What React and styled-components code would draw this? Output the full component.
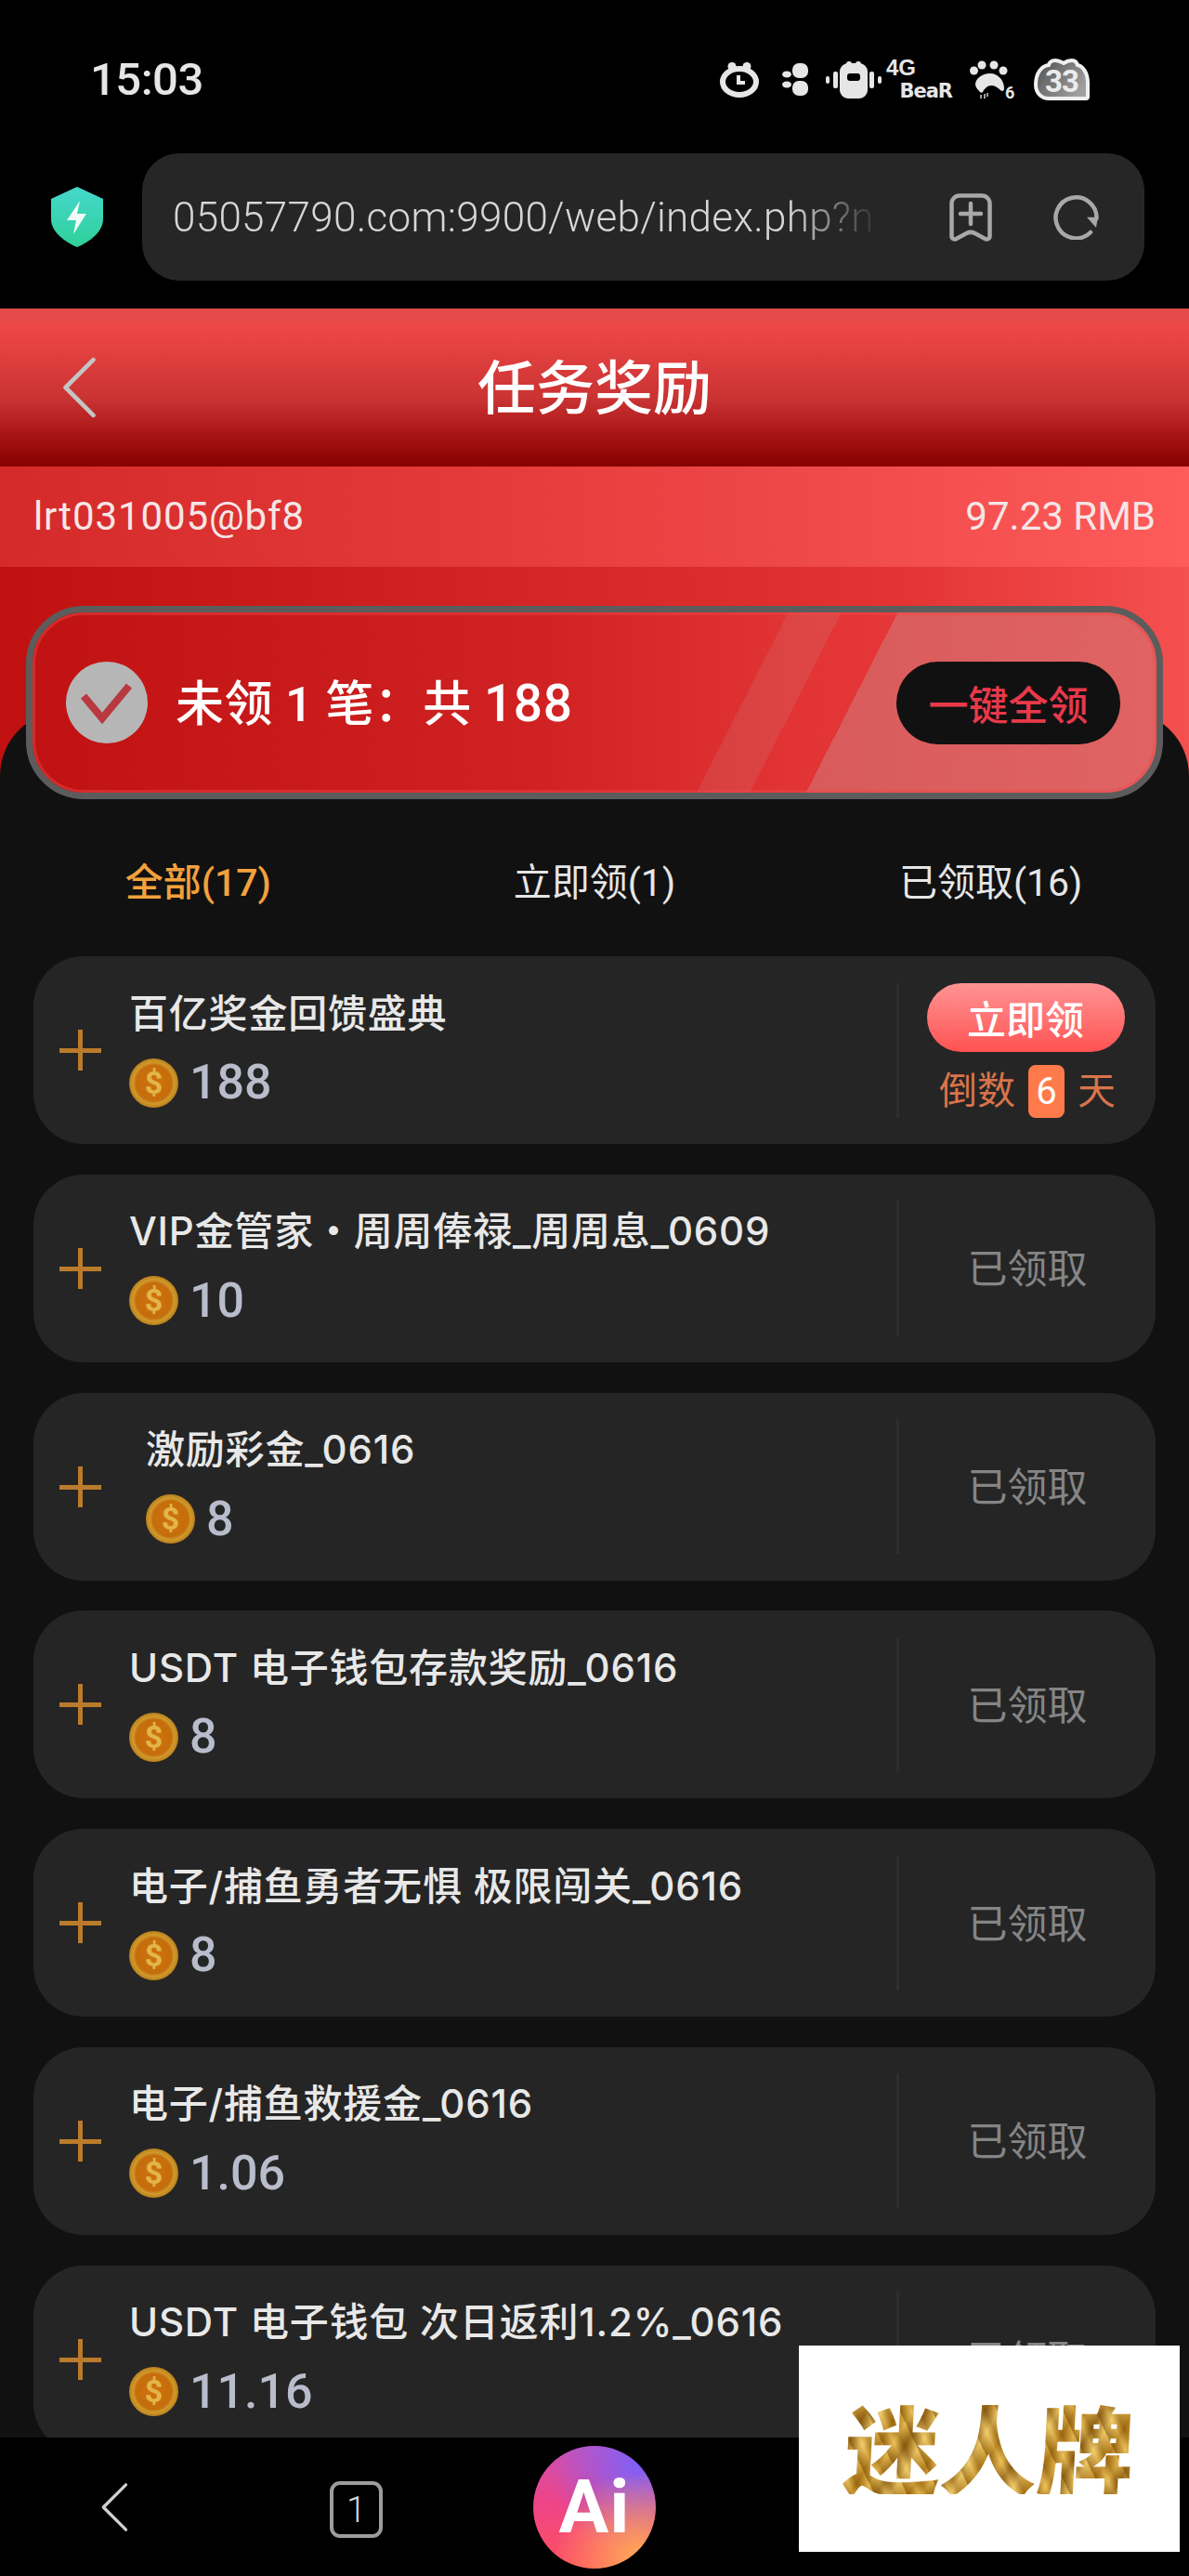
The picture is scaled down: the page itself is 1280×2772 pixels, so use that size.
import React from "react";
import styled, { createGlobalStyle } from "styled-components";

const GlobalStyle = createGlobalStyle`
	html, body {
		margin: 0;
		padding: 0;
		background: #000;
	}
	* {
		box-sizing: border-box;
	}
`;

const FONT = `Roboto, "Noto Sans CJK SC", sans-serif`;

const Page = styled.div`
	display: flex;
	flex-direction: column;
	width: 1280px;
	height: 2772px;
	overflow: hidden;
	position: relative;
	background: #000;
	font-family: ${FONT};
`;

const StatusBar = styled.div`
	display: flex;
	align-items: center;
	justify-content: space-between;
	flex: 0 0 165px;
	padding: 6px 107px 0 97px;
	color: #e6e6e6;
`;

const Clock = styled.div`
	font-size: 49px;
	font-weight: 500;
	letter-spacing: -0.5px;
`;

const StatusIcons = styled.div`
	display: flex;
	align-items: center;
	gap: 19px;
`;

const ClockSvg = styled.svg`
	margin-right: 6px;
`;

const NetInfo = styled.div`
	display: flex;
	flex-direction: column;
	width: 71px;
	margin: -2px 0 0 -14px;
	font-family: "Liberation Sans", sans-serif;
	font-weight: 700;
	line-height: 1;
`;

const NetTop = styled.span`
	font-size: 24px;
`;

const NetBottom = styled.span`
	align-self: flex-end;
	margin-top: 3px;
	font-size: 21px;
	font-family: "DejaVu Sans", sans-serif;
	letter-spacing: -1px;
`;

const UrlRow = styled.div`
	display: flex;
	align-items: center;
	flex: 0 0 167px;
	padding: 0 48px 30px 55px;
	gap: 42px;
`;

const UrlBar = styled.div`
	display: flex;
	align-items: center;
	flex: 1;
	height: 137px;
	padding: 0 48px 0 33px;
	border-radius: 40px;
	background: #262626;
`;

const UrlText = styled.div`
	flex: 1;
	overflow: hidden;
	white-space: nowrap;
	font-size: 44px;
	font-weight: 300;
	letter-spacing: 0.3px;
	color: #d6d6d6;
	-webkit-mask-image: linear-gradient(90deg, #000 87%, transparent 100%);
	mask-image: linear-gradient(90deg, #000 87%, transparent 100%);
	max-width: 762px;
`;

const UrlActions = styled.div`
	display: flex;
	align-items: center;
	gap: 66px;
	margin-left: auto;
`;

const Header = styled.div`
	display: flex;
	align-items: center;
	justify-content: center;
	position: relative;
	flex: 0 0 170px;
	padding-bottom: 10px;
	background: linear-gradient(180deg, #e24c4c 0%, #ee4646 14%, #c93232 58%, #a81414 80%, #880000 100%);
`;

const BackLink = styled.div`
	position: absolute;
	left: 66px;
	top: 52px;
	display: flex;
`;

const Title = styled.h1`
	margin: 0;
	font-size: 63px;
	font-weight: 500;
	color: #fff;
`;

const UserRow = styled.div`
	display: flex;
	align-items: center;
	justify-content: space-between;
	flex: 0 0 108px;
	padding: 0 36px 2px 36px;
	background: linear-gradient(90deg, #d52a2a 0%, #e53a3a 40%, #f04a4a 70%, #ff5b5b 100%);
	font-size: 42px;
	color: #f4e6e6;
`;

const UserName = styled.span`
	letter-spacing: 0.9px;
`;

const RedBand = styled.div`
	flex: 0 0 225px;
	background: linear-gradient(90deg, #c01010 0%, #d42626 45%, #e33333 75%, #f55050 100%);
`;

const Panel = styled.div`
	display: flex;
	flex-direction: column;
	flex: 1;
	min-height: 0;
	margin-top: -70px;
	padding: 0 36px;
	border-radius: 70px 70px 0 0;
	background: #111;
`;

const Banner = styled.div`
	display: flex;
	align-items: center;
	flex: 0 0 208px;
	margin: -113px -8px 0;
	padding: 0 39px 0 36px;
	border: 7px solid #5c5c5c;
	border-radius: 62px;
	box-shadow: inset 0 0 0 3px rgba(240, 70, 70, 0.45);
	background:
		linear-gradient(
			117deg,
			transparent 725px,
			rgba(190, 190, 190, 0.12) 725px,
			rgba(190, 190, 190, 0.12) 776px,
			transparent 776px,
			transparent 830px,
			rgba(190, 190, 190, 0.28) 830px
		),
		linear-gradient(90deg, #c01212 0%, #d02222 45%, #e23434 68%, #ee4040 100%);
`;

const BannerText = styled.div`
	margin-left: 30px;
	padding-bottom: 5px;
	font-size: 52px;
	font-weight: 500;
	letter-spacing: 0.4px;
	color: #fff;
	white-space: pre;
`;

const BannerTotal = styled.span`
	font-size: 55px;
	letter-spacing: 0.6px;
`;

const ClaimAll = styled.button`
	margin-left: auto;
	width: 241px;
	height: 89px;
	border: 0;
	border-radius: 45px;
	background: #111;
	color: #e8394a;
	font-family: ${FONT};
	font-size: 43px;
	font-weight: 500;
`;

const Tabs = styled.div`
	display: grid;
	grid-template-columns: repeat(3, 1fr);
	align-items: center;
	flex: 0 0 169px;
	margin: 0 -36px;
	padding: 3px 0 0;
`;

const Tab = styled.div`
	text-align: center;
	font-size: 41px;
	font-weight: ${(props) => (props.$active ? 500 : 400)};
	color: ${(props) => (props.$active ? "#f2a13c" : "#e6e6e6")};
`;

const List = styled.div`
	display: flex;
	flex-direction: column;
	flex: 1;
	min-height: 0;
	overflow: hidden;
	gap: 32.8px;
`;

const Card = styled.div`
	display: flex;
	align-items: center;
	flex: 0 0 202px;
	padding: 0 0 0 28px;
	border-radius: 54px;
	background: #252525;
`;

const Plus = styled.div`
	position: relative;
	flex: 0 0 45px;
	height: 44px;
	&::before,
	&::after {
		content: "";
		position: absolute;
		background: #bb7b2c;
	}
	&::before {
		left: 0;
		right: 0;
		top: 20px;
		height: 5px;
	}
	&::after {
		top: 0;
		bottom: 0;
		left: 20px;
		width: 5px;
	}
`;

const CardBody = styled.div`
	display: flex;
	flex-direction: column;
	flex: 1;
	min-width: 0;
	margin-top: -5.5px;
	margin-left: ${(props) => (props.$indent ? "48px" : "30px")};
`;

const CardTitle = styled.div`
	font-family: Inter, "Noto Sans CJK SC", sans-serif;
	font-size: 42px;
	font-weight: 500;
	line-height: 58px;
	color: #e8e8e8;
	white-space: pre;
	letter-spacing: 0.8px;
`;

const Amount = styled.div`
	display: flex;
	align-items: center;
	gap: 12px;
	margin-top: 17.5px;
	font-size: 52px;
	font-weight: 500;
	line-height: 56px;
	color: #b9bccb;
`;

const CardAction = styled.div`
	display: flex;
	flex-direction: column;
	align-items: center;
	justify-content: center;
	flex: 0 0 279px;
	height: 145px;
	border-left: 3px solid #2e2e2e;
`;

const ClaimButton = styled.button`
	width: 213px;
	height: 78px;
	margin-left: -4px;
	border: 0;
	border-radius: 39px;
	background: linear-gradient(180deg, #ff9393 0%, #ff7474 50%, #ff5252 100%);
	color: #fff;
	font-family: ${FONT};
	font-size: 42px;
	font-weight: 500;
`;

const Countdown = styled.div`
	display: flex;
	align-items: center;
	gap: 14px;
	margin-top: 14px;
	font-size: 41px;
	line-height: 57px;
	color: #d9744a;
`;

const DayBadge = styled.span`
	width: 39px;
	height: 57px;
	border-radius: 8px;
	background: #ff7a4a;
	color: #fff;
	text-align: center;
	font-size: 40px;
`;

const Claimed = styled.div`
	margin-top: -5px;
	font-size: 43px;
	color: #858585;
`;

const BottomBar = styled.div`
	display: flex;
	align-items: center;
	flex: 0 0 149px;
	padding: 0 0 0 108px;
	background: #000;
	position: relative;
`;

const TabCount = styled.div`
	display: flex;
	align-items: center;
	justify-content: center;
	width: 57px;
	height: 61px;
	margin: 6px 0 0 217px;
	border: 4px solid #9c9c9c;
	border-radius: 11px;
	color: #d6d6d6;
	font-size: 38px;
	font-weight: 300;
`;

const AiButton = styled.div`
	display: flex;
	align-items: center;
	justify-content: center;
	width: 132px;
	height: 132px;
	margin-left: 162px;
	border-radius: 50%;
	background:
		radial-gradient(circle at 85% 90%, #ffa858 0%, rgba(255, 168, 88, 0) 55%),
		radial-gradient(circle at 85% 15%, #7f60f8 0%, rgba(127, 96, 248, 0) 60%),
		linear-gradient(180deg, #d050b0 0%, #ee4488 45%, #ff5060 100%);
	color: #fff;
	font-size: 80px;
	font-weight: 700;
	letter-spacing: 1px;
`;

const Watermark = styled.div`
	position: absolute;
	left: 860px;
	top: 2524px;
	display: flex;
	align-items: center;
	justify-content: center;
	width: 410px;
	height: 222px;
	padding-bottom: 6px;
	background: #fff;
`;

const WatermarkText = styled.span`
	font-family: "Noto Sans CJK SC", sans-serif;
	font-size: 104px;
	font-weight: 900;
	line-height: 1;
	transform: skewX(-3deg);
	background:
		repeating-linear-gradient(
			62deg,
			rgba(120, 76, 8, 0.55) 0px,
			rgba(250, 215, 120, 0.35) 11px,
			rgba(120, 76, 8, 0.4) 19px,
			rgba(250, 215, 120, 0.2) 31px
		),
		repeating-linear-gradient(118deg, #a8700f 0px, #e9b94a 14px, #8d5c0e 26px, #f3cd69 40px, #b47c14 56px);
	-webkit-background-clip: text;
	background-clip: text;
	color: transparent;
`;

const ClockIcon = () => (
	<ClockSvg width="42" height="38" viewBox="0 0 42 38">
		<circle cx="13" cy="4.5" r="4.5" fill="#e6e6e6" />
		<circle cx="29" cy="4.5" r="4.5" fill="#e6e6e6" />
		<ellipse cx="21" cy="21" rx="18" ry="14" fill="none" stroke="#e6e6e6" strokeWidth="6" />
		<path d="M20 14v8h7" fill="none" stroke="#e6e6e6" strokeWidth="4" />
	</ClockSvg>
);

const ButterflyIcon = () => (
	<svg width="28" height="35" viewBox="0 0 28 35">
		<g fill="#e6e6e6">
			<ellipse cx="5" cy="12" rx="5" ry="3.5" />
			<ellipse cx="5" cy="23" rx="5" ry="3.5" />
			<rect x="11" y="0" width="17" height="16" rx="7" />
			<rect x="11" y="19" width="17" height="16" rx="7" />
		</g>
	</svg>
);

const VibrateIcon = () => (
	<svg width="60" height="40" viewBox="0 0 60 40">
		<g fill="#e6e6e6">
			<rect x="0" y="16" width="4" height="8" rx="2" />
			<rect x="8" y="11" width="5" height="18" rx="2" />
			<rect x="47" y="11" width="5" height="18" rx="2" />
			<rect x="56" y="16" width="4" height="8" rx="2" />
			<circle cx="25" cy="3" r="3" />
			<circle cx="35" cy="3" r="3" />
			<path fillRule="evenodd" d="M24 2h12a9 9 0 0 1 9 9v20a9 9 0 0 1-9 9H24a9 9 0 0 1-9-9V11a9 9 0 0 1 9-9zM26 13a3 3 0 0 0-3 3v2a3 3 0 0 0 3 3h8a3 3 0 0 0 3-3v-2a3 3 0 0 0-3-3z" />
		</g>
	</svg>
);

const PawIcon = () => (
	<svg width="50" height="42" viewBox="0 0 50 42">
		<g fill="#e6e6e6">
			<circle cx="4.5" cy="11" r="4.5" />
			<circle cx="13" cy="5" r="4.5" />
			<circle cx="26" cy="5" r="4.5" />
			<circle cx="36" cy="11" r="4.5" />
			<path d="M22 14c8 0 15 7 15 16 0 3-2 4-4 2-3-3-6-5-10-5-4 0-6 3-8 5l-1 2c-1 1-2 1-3 0-3-3-5-6-5-8 0-6 7-12 16-12z" />
		</g>
		<path d="M12 37v4M16 36v5M19 35v4" stroke="#cfcfcf" strokeWidth="1.5" />
		<text x="38" y="41" fill="#e6e6e6" fontSize="18" fontWeight="700" fontFamily="Roboto, sans-serif">
			6
		</text>
	</svg>
);

const BatteryIcon = () => (
	<svg width="60" height="46" viewBox="0 0 60 46">
		<defs>
			<linearGradient id="battery" x1="0" y1="0" x2="1" y2="0.6">
				<stop offset="0" stopColor="#4e4e4e" />
				<stop offset="1" stopColor="#a0a0a0" />
			</linearGradient>
		</defs>
		<path
			d="M2 28C2 16 8 8 16 7c1-4 4-5 7-5 3 0 5 1 9 3 3-2 6-3 9-3s5 2 6 5c6 1 11 9 11 19v15a2 2 0 0 1-2 2H16C8 43 2 37 2 28z"
			fill="url(#battery)"
			stroke="#f0f0f0"
			strokeWidth="4"
		/>
		<text x="30" y="36" textAnchor="middle" fill="#ececec" fontSize="33" fontWeight="700" letterSpacing="-1" fontFamily="Roboto, sans-serif">
			33
		</text>
	</svg>
);

const ShieldIcon = () => (
	<svg width="56" height="65" viewBox="0 0 56 65">
		<defs>
			<linearGradient id="shield" x1="0" y1="0" x2="0" y2="1">
				<stop offset="0" stopColor="#45d8cc" />
				<stop offset="1" stopColor="#2fd09a" />
			</linearGradient>
		</defs>
		<path d="M28 0l28 13v22c0 12-12 23-28 30C12 58 0 47 0 35V13z" fill="url(#shield)" />
		<path d="M31 15L17 36h10l-3 15 14-22H28z" fill="#f2fbf8" />
	</svg>
);

const BookmarkIcon = () => (
	<svg width="46" height="52" viewBox="0 0 46 52" fill="none" stroke="#a8a8a8" strokeWidth="4.5" strokeLinecap="round">
		<path d="M2.5 11A8.5 8.5 0 0 1 11 2.5h24a8.5 8.5 0 0 1 8.5 8.5v35c0 3-3 4-5 3l-11-6c-3-1.5-6-1.5-9 0l-11 6c-2 1-5 0-5-3z" />
		<path d="M23 11v22M12 22h22" />
	</svg>
);

const ReloadIcon = () => (
	<svg width="50" height="48" viewBox="0 0 50 48" fill="none">
		<path d="M40 40A22 22 0 1 1 46.5 25" stroke="#a8a8a8" strokeWidth="4.5" strokeLinecap="round" />
		<path d="M36 23.7h12L46 35z" fill="#a8a8a8" />
	</svg>
);

const Chevron = ({ width, height, color, strokeWidth }) => (
	<svg width={width} height={height} viewBox="0 0 36 64" fill="none" stroke={color} strokeWidth={strokeWidth} strokeLinecap="round" strokeLinejoin="round">
		<path d="M33 3L4 32l29 29" />
	</svg>
);

const CheckBadge = () => (
	<svg width="88" height="88" viewBox="0 0 88 88">
		<circle cx="44" cy="44" r="44" fill="#b6b6b6" />
		<path d="M19 37l20 24 29-35" fill="none" stroke="#b8393f" strokeWidth="8" />
	</svg>
);

const Coin = ({ id }) => (
	<svg width="53" height="53" viewBox="0 0 53 53">
		<defs>
			<radialGradient id={id} cx="0.5" cy="0.5" r="0.5">
				<stop offset="0" stopColor="#cf720c" />
				<stop offset="0.72" stopColor="#c56d0c" />
				<stop offset="0.84" stopColor="#cf9a2c" />
				<stop offset="1" stopColor="#ba7f1c" />
			</radialGradient>
		</defs>
		<circle cx="26.5" cy="26.5" r="26.5" fill={`url(#${id})`} />
		<text x="26.5" y="38" textAnchor="middle" fill="#e3b548" fontSize="34" fontWeight="700" fontFamily="Roboto, sans-serif">
			$
		</text>
	</svg>
);

const tasks = [
	{ title: "百亿奖金回馈盛典", amount: "188", open: true },
	{ title: "VIP金管家・周周俸禄_周周息_0609", amount: "10" },
	{ title: "激励彩金_0616", amount: "8", indent: true },
	{ title: "USDT 电子钱包存款奖励_0616", amount: "8" },
	{ title: "电子/捕鱼勇者无惧 极限闯关_0616", amount: "8" },
	{ title: "电子/捕鱼救援金_0616", amount: "1.06" },
	{ title: "USDT 电子钱包 次日返利1.2%_0616", amount: "11.16" },
];

const App = () => {
	return (
		<Page>
			<GlobalStyle />
			<StatusBar>
				<Clock>15:03</Clock>
				<StatusIcons>
					<ClockIcon />
					<ButterflyIcon />
					<VibrateIcon />
					<NetInfo>
						<NetTop>4G</NetTop>
						<NetBottom>BeaR</NetBottom>
					</NetInfo>
					<PawIcon />
					<BatteryIcon />
				</StatusIcons>
			</StatusBar>
			<UrlRow>
				<ShieldIcon />
				<UrlBar>
					<UrlText>05057790.com:9900/web/index.php?n</UrlText>
					<UrlActions>
						<BookmarkIcon />
						<ReloadIcon />
					</UrlActions>
				</UrlBar>
			</UrlRow>
			<Header>
				<BackLink>
					<Chevron width={38} height={66} color="#c4c4c4" strokeWidth={4.5} />
				</BackLink>
				<Title>任务奖励</Title>
			</Header>
			<UserRow>
				<UserName>lrt031005@bf8</UserName>
				<span>97.23 RMB</span>
			</UserRow>
			<RedBand />
			<Panel>
				<Banner>
					<CheckBadge />
					<BannerText>
						未领 1 笔：共 <BannerTotal>188</BannerTotal>
					</BannerText>
					<ClaimAll>一键全领</ClaimAll>
				</Banner>
				<Tabs>
					<Tab $active>全部(17)</Tab>
					<Tab>立即领(1)</Tab>
					<Tab>已领取(16)</Tab>
				</Tabs>
				<List>
					{tasks.map((task, i) => (
						<Card key={task.title}>
							<Plus />
							<CardBody $indent={task.indent}>
								<CardTitle>{task.title}</CardTitle>
								<Amount>
									<Coin id={`coin${i}`} />
									{task.amount}
								</Amount>
							</CardBody>
							<CardAction>
								{task.open ? (
									<>
										<ClaimButton>立即领</ClaimButton>
										<Countdown>
											倒数
											<DayBadge>6</DayBadge>
											天
										</Countdown>
									</>
								) : (
									<Claimed>已领取</Claimed>
								)}
							</CardAction>
						</Card>
					))}
				</List>
			</Panel>
			<BottomBar>
				<Chevron width={30} height={54} color="#d0d0d0" strokeWidth={4} />
				<TabCount>1</TabCount>
				<AiButton>Ai</AiButton>
			</BottomBar>
			<Watermark>
				<WatermarkText>迷人牌</WatermarkText>
			</Watermark>
		</Page>
	);
};

export default App;
